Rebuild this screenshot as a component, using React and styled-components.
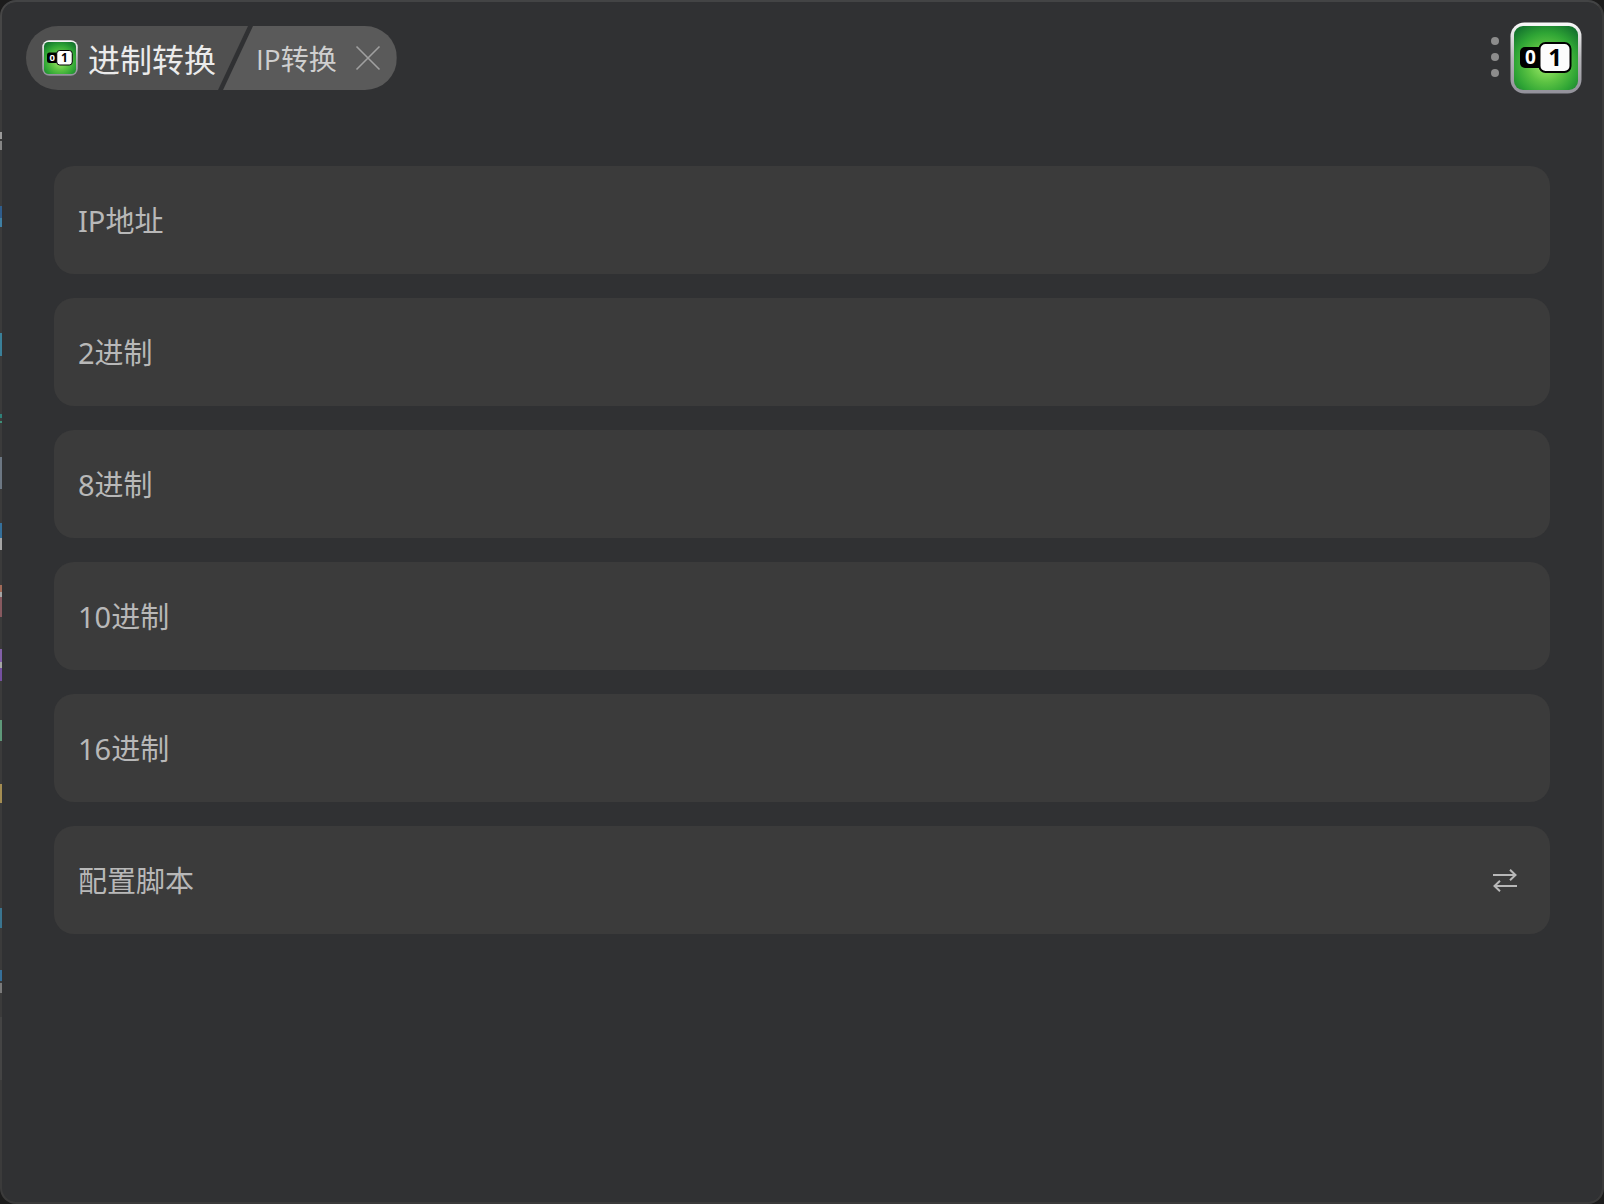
import React, { useState } from 'react';
import styled, { createGlobalStyle } from 'styled-components';

// what shows through the translucent left edge: [top, bottom, colour]
const edgeMarks = [
  [0, 90, '#464646'],
  [132, 139, '#9a9a9a'],
  [141, 150, '#858585'],
  [206, 218, '#2f5d8c'],
  [218, 227, '#3f7fa3'],
  [333, 356, '#3a8099'],
  [414, 418, '#2f7f78'],
  [421, 423, '#3f8f78'],
  [457, 489, '#6c7783'],
  [523, 538, '#35709b'],
  [538, 550, '#a5a5a5'],
  [585, 592, '#a06a58'],
  [592, 597, '#a5a5a5'],
  [597, 617, '#87595f'],
  [649, 662, '#8260a8'],
  [662, 668, '#a5a5a5'],
  [668, 681, '#7450a0'],
  [720, 741, '#5e9879'],
  [784, 803, '#a48d52'],
  [908, 928, '#3a7590'],
  [970, 981, '#36709a'],
  [983, 993, '#7a7a7a'],
  [1017, 1080, '#444444'],
];

const edge = '#3b3b3b';

const edgeGradient = edgeMarks
  .map(([top, bottom, color]) => `${edge} ${top}px, ${color} ${top}px, ${color} ${bottom}px, ${edge} ${bottom}px`)
  .join(', ');

const GlobalStyle = createGlobalStyle`
  * {
    box-sizing: border-box;
  }

  body {
    margin: 0;
    background: #1c1c1c;
    font-family: 'Open Sans', 'Noto Sans CJK SC', sans-serif;
  }

  button,
  input {
    font: inherit;
    color: inherit;
    border: none;
    padding: 0;
    background: none;
  }
`;

const Window = styled.main`
  min-height: 100vh;
  border: 2px solid #3a3a3a;
  border-top-color: #434445;
  border-left-color: transparent;
  border-radius: 16px;
  background:
    linear-gradient(#303133, #303133) padding-box,
    linear-gradient(${edgeGradient}) border-box;
`;

const Header = styled.header`
  display: flex;
  justify-content: space-between;
  align-items: center;
  height: 112px;
  padding: 0 20px 0 24px;
`;

const Tabs = styled.nav`
  display: flex;
  height: 64px;
  border-radius: 32px;
  overflow: hidden;
`;

const AppTab = styled.button`
  display: flex;
  align-items: center;
  gap: 10px;
  padding: 0 32px 0 16px;
  background: #505050;
  color: #ebebeb;
  font-family: 'Noto Sans CJK SC', sans-serif;
  font-size: 32px;
  line-height: 64px;
  clip-path: polygon(0 0, 100% 0, calc(100% - 30px) 100%, 0 100%);
`;

const FeatureTab = styled.div`
  display: flex;
  align-items: center;
  gap: 17px;
  margin-left: -25px;
  padding: 0 15px 0 33px;
  background: #5a5a5a;
  color: #cfcfcf;
  font-size: 28px;
  clip-path: polygon(30px 0, 100% 0, 100% 100%, 0 100%);
`;

const FeatureName = styled.span`
  padding-top: 2px;
  line-height: 40px;
`;

const IconButton = styled.button`
  display: flex;
  align-items: center;
  justify-content: center;
  color: ${({ $color }) => $color};
`;

const Actions = styled.div`
  display: flex;
  align-items: center;
  gap: 9px;
`;

const Fields = styled.form`
  display: flex;
  flex-direction: column;
  gap: 24px;
  padding: 52px;
`;

const FieldRow = styled.div`
  display: flex;
  align-items: center;
  height: 108px;
  padding: 2px 32px 0 24px;
  border-radius: 20px;
  background: #3b3b3b;
  color: #b8b8b8;
`;

const FieldLabel = styled.label`
  font-family: 'Noto Sans', 'Noto Sans CJK SC', sans-serif;
  font-size: 29px;
  line-height: 40px;
  white-space: nowrap;
`;

const FieldInput = styled.input`
  flex: 1;
  min-width: 0;
  height: 100%;
  margin-left: 16px;
  font-size: 29px;
  outline: none;
`;

const fields = [
  { id: 'ip', label: 'IP地址' },
  { id: 'bin', label: '2进制' },
  { id: 'oct', label: '8进制' },
  { id: 'dec', label: '10进制' },
  { id: 'hex', label: '16进制' },
  { id: 'script', label: '配置脚本', swap: true },
];

function Logo({ size, id }) {
  return (
    <svg width={size} height={size} viewBox="0 0 72 72" aria-hidden="true">
      <defs>
        <linearGradient id={`${id}-rim`} x1="0" y1="0" x2="0" y2="1">
          <stop offset="0" stopColor="#fafafa" />
          <stop offset="0.5" stopColor="#b5b5b9" />
          <stop offset="1" stopColor="#92919a" />
        </linearGradient>
        <radialGradient id={`${id}-face`} cx="0.5" cy="0.6" r="0.7">
          <stop offset="0" stopColor="#a4ee6c" />
          <stop offset="0.4" stopColor="#5cc343" />
          <stop offset="0.7" stopColor="#2fa535" />
          <stop offset="1" stopColor="#14742e" />
        </radialGradient>
      </defs>
      <rect x="0.5" y="0.5" width="71" height="71" rx="14" fill={`url(#${id}-rim)`} />
      <rect x="4" y="4" width="64" height="64" rx="9" fill={`url(#${id}-face)`} />
      <rect x="10" y="25" width="28" height="21" rx="5" fill="#000" />
      <rect x="29.500" y="21" width="31" height="29" rx="6" fill="#fcfcfc" stroke="#000" strokeWidth="2" />
      <text x="20.500" y="42" fill="#fff" fontSize="19" fontWeight="700" textAnchor="middle" fontFamily="Open Sans, sans-serif">0</text>
      <text x="45" y="44" fill="#000" fontSize="24" fontWeight="700" textAnchor="middle" fontFamily="Open Sans, sans-serif">1</text>
    </svg>
  );
}

export default function App() {
  const [values, setValues] = useState({});

  return (
    <>
      <GlobalStyle />
      <Window>
        <Header>
          <Tabs>
            <AppTab type="button">
              <Logo size={36} id="small" />
              进制转换
            </AppTab>
            <FeatureTab>
              <FeatureName>IP转换</FeatureName>
              <IconButton type="button" aria-label="关闭" $color="#a0a0a0">
                <svg width="28" height="28" viewBox="0 0 28 28" fill="none" stroke="currentColor" strokeWidth="1.6">
                  <path d="M2.5 2.5 25.5 25.5M25.5 2.5 2.5 25.5" />
                </svg>
              </IconButton>
            </FeatureTab>
          </Tabs>
          <Actions>
            <IconButton type="button" aria-label="菜单" $color="#8c8c8c">
              <svg width="12" height="42" viewBox="0 0 12 42" fill="currentColor">
                <circle cx="6" cy="4" r="4" />
                <circle cx="6" cy="20" r="4" />
                <circle cx="6" cy="36" r="4" />
              </svg>
            </IconButton>
            <IconButton type="button" aria-label="应用">
              <Logo size={72} id="large" />
            </IconButton>
          </Actions>
        </Header>

        <Fields onSubmit={(e) => e.preventDefault()}>
          {fields.map(({ id, label, swap }) => (
            <FieldRow key={id}>
              <FieldLabel htmlFor={id}>{label}</FieldLabel>
              <FieldInput
                id={id}
                value={values[id] || ''}
                onChange={(e) => setValues({ ...values, [id]: e.target.value })}
              />
              {swap && (
                <IconButton type="button" aria-label="转换" $color="#b8b8b8">
                  <svg width="26" height="24" viewBox="0 0 26 24" fill="none" stroke="currentColor" strokeWidth="2">
                    <path d="M1 6H23M18 0.8 23.5 6 18 11.2M25 17H3M8 11.8 2.5 17 8 22.2" />
                  </svg>
                </IconButton>
              )}
            </FieldRow>
          ))}
        </Fields>
      </Window>
    </>
  );
}
